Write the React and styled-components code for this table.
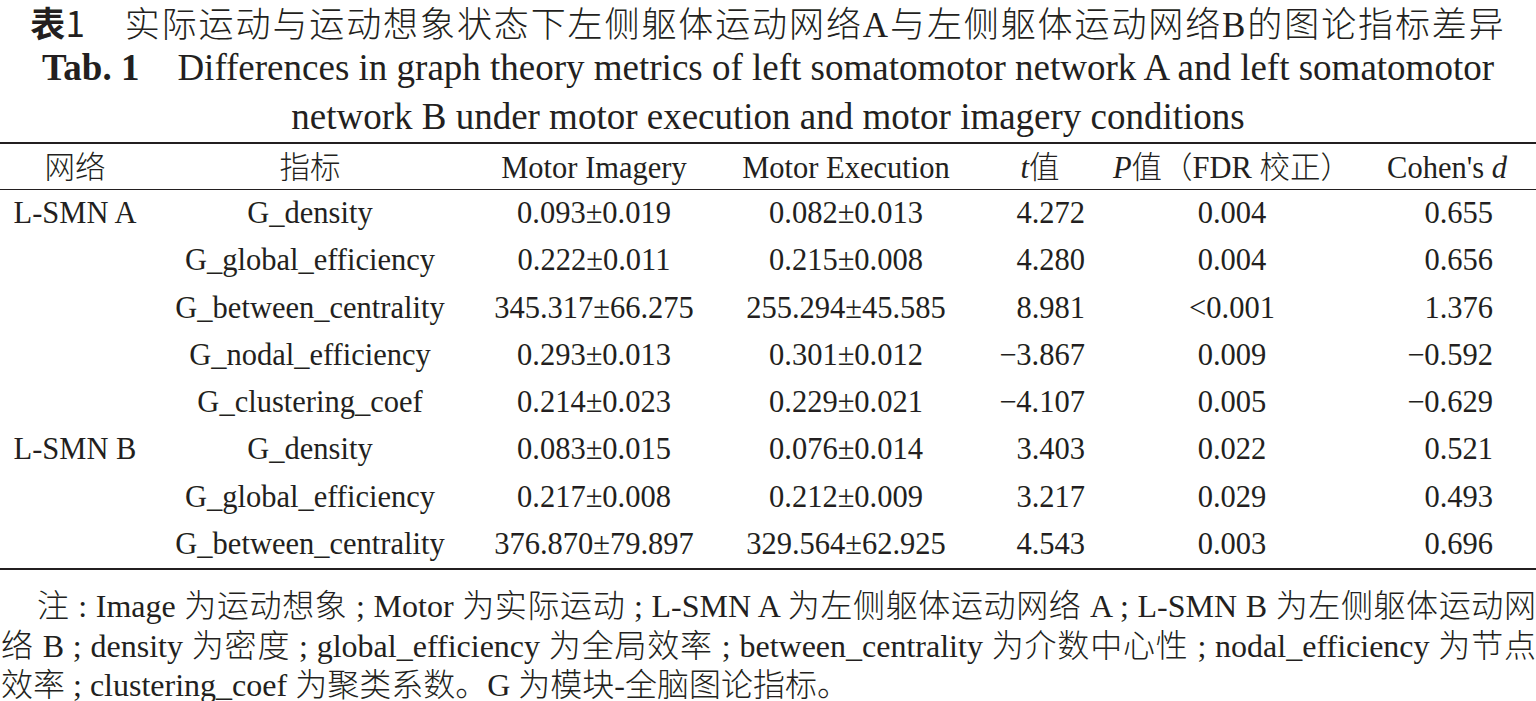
import React from "react";
import styled, { createGlobalStyle } from "styled-components";

const GlobalStyle = createGlobalStyle`
  html, body {
    margin: 0;
    padding: 0;
    background: #ffffff;
  }
  body {
    color: #231f20;
    font-family: "Liberation Serif", "Noto Sans CJK SC", serif;
    overflow: hidden;
  }
`;

const Page = styled.div`
  width: 1536px;
  height: 701px;
  overflow: hidden;
  display: flex;
  flex-direction: column;
`;

const Caption = styled.div`
  display: flex;
  flex-direction: column;
  align-items: center;
`;

const CaptionLine = styled.div`
  height: ${(p) => p.$h}px;
  line-height: ${(p) => p.$h}px;
  font-size: ${(p) => p.$size}px;
  letter-spacing: ${(p) => p.$spacing || 0}px;
  font-weight: 300;
  white-space: nowrap;
  text-align: center;
`;

const CnLabel = styled.span`
  font-family: "Noto Sans CJK SC", sans-serif;
  font-weight: 700;
  margin-right: 40px;
  letter-spacing: 0;
`;

const CnNum = styled.span`
  font-family: "Noto Sans CJK SC", sans-serif;
  font-weight: 400;
`;

const EnLabel = styled.span`
  font-weight: 700;
  margin-right: 38px;
`;

const Table = styled.div`
  display: grid;
  grid-template-columns: 150px 320px 248px 256px 132px 252px 178px;
  font-size: 30.5px;
  border-top: 2px solid #231f20;
  border-bottom: 2px solid #231f20;
`;

const HeadCell = styled.div`
  height: 41px;
  padding-top: 4px;
  line-height: 41px;
  text-align: center;
  font-weight: 300;
  white-space: nowrap;
  border-bottom: 1.5px solid #231f20;
`;

const Cell = styled.div`
  height: 47.25px;
  line-height: 47.25px;
  text-align: ${(p) => p.$align || "center"};
  padding-right: ${(p) => p.$pad || 0}px;
  white-space: nowrap;
`;

const Ital = styled.i`
  font-style: italic;
`;

const Notes = styled.div`
  margin-top: 17px;
  font-size: 32px;
  font-weight: 300;
  padding-left: 1px;
`;

const NoteLine = styled.div`
  height: 39.5px;
  line-height: 39.5px;
  text-align: justify;
  text-justify: inter-word;
  text-align-last: ${(p) => (p.$last ? "left" : "justify")};
  text-indent: ${(p) => (p.$indent ? 36 : 0)}px;
  white-space: nowrap;
`;

const columns = [
  { align: "center" },
  { align: "center" },
  { align: "center" },
  { align: "center" },
  { align: "right", pad: 21 },
  { align: "center" },
  { align: "right", pad: 43 },
];

const rows = [
  ["L-SMN A", "G_density", "0.093±0.019", "0.082±0.013", "4.272", "0.004", "0.655"],
  ["", "G_global_efficiency", "0.222±0.011", "0.215±0.008", "4.280", "0.004", "0.656"],
  ["", "G_between_centrality", "345.317±66.275", "255.294±45.585", "8.981", "<0.001", "1.376"],
  ["", "G_nodal_efficiency", "0.293±0.013", "0.301±0.012", "−3.867", "0.009", "−0.592"],
  ["", "G_clustering_coef", "0.214±0.023", "0.229±0.021", "−4.107", "0.005", "−0.629"],
  ["L-SMN B", "G_density", "0.083±0.015", "0.076±0.014", "3.403", "0.022", "0.521"],
  ["", "G_global_efficiency", "0.217±0.008", "0.212±0.009", "3.217", "0.029", "0.493"],
  ["", "G_between_centrality", "376.870±79.897", "329.564±62.925", "4.543", "0.003", "0.696"],
];

const headers = [
  "网络",
  "指标",
  "Motor Imagery",
  "Motor Execution",
  <><Ital>t</Ital>值</>,
  <><Ital>P</Ital>值（FDR 校正）</>,
  <>Cohen's <Ital>d</Ital></>,
];

export default function App() {
  return (
    <Page>
      <GlobalStyle />
      <Caption>
        <CaptionLine $h={44} $size={35} $spacing={1.9}>
          <CnLabel>表<CnNum>1</CnNum></CnLabel>
          实际运动与运动想象状态下左侧躯体运动网络A与左侧躯体运动网络B的图论指标差异
        </CaptionLine>
        <CaptionLine $h={48} $size={37}>
          <EnLabel>Tab. 1</EnLabel>
          Differences in graph theory metrics of left somatomotor network A and left somatomotor
        </CaptionLine>
        <CaptionLine $h={50} $size={37}>
          network B under motor execution and motor imagery conditions
        </CaptionLine>
      </Caption>

      <Table>
        {headers.map((h, i) => (
          <HeadCell key={"h" + i}>{h}</HeadCell>
        ))}
        {rows.map((r, ri) =>
          r.map((v, ci) => (
            <Cell key={ri + "-" + ci} $align={columns[ci].align} $pad={columns[ci].pad}>
              {v}
            </Cell>
          ))
        )}
      </Table>

      <Notes>
        <NoteLine $indent>
          注 : Image 为运动想象 ; Motor 为实际运动 ; L-SMN A 为左侧躯体运动网络 A ; L-SMN B 为左侧躯体运动网
        </NoteLine>
        <NoteLine>
          络 B ; density 为密度 ; global_efficiency 为全局效率 ; between_centrality 为介数中心性 ; nodal_efficiency 为节点
        </NoteLine>
        <NoteLine $last>
          效率 ; clustering_coef 为聚类系数。G 为模块-全脑图论指标。
        </NoteLine>
      </Notes>
    </Page>
  );
}
